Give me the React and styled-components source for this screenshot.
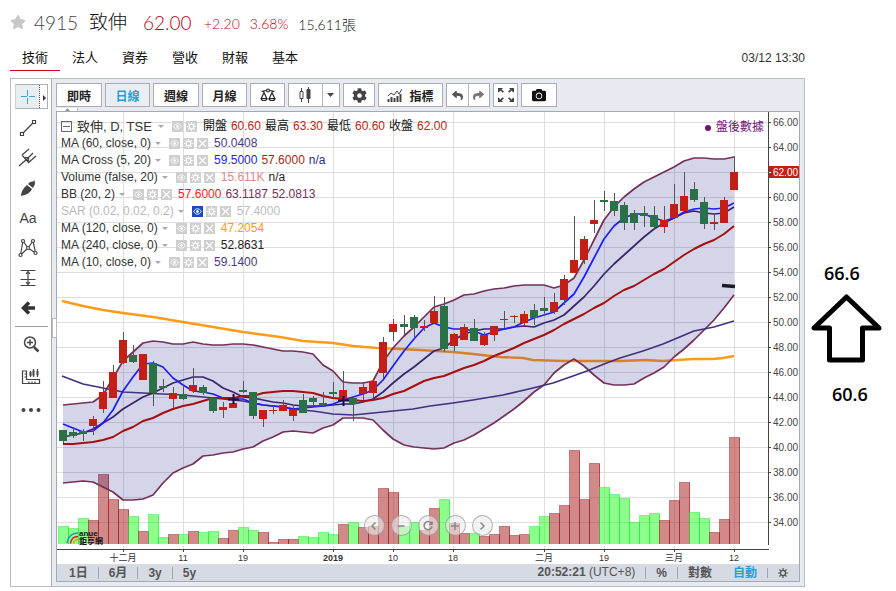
import React from "react";
import styled, { createGlobalStyle } from "styled-components";
import { FaCamera, FaCog, FaReply, FaShare, FaStar } from "react-icons/fa";

const GlobalStyle = createGlobalStyle`
  * {
    box-sizing: border-box;
  }
  body {
    margin: 0;
    background: #ffffff;
    color: #222222;
    font-family: "Liberation Sans", "Noto Sans CJK TC", sans-serif;
    font-size: 12px;
  }
  button {
    font-family: inherit;
    font-size: inherit;
    color: inherit;
    padding: 0;
    margin: 0;
    border: 0;
    background: none;
    cursor: pointer;
  }
`;

const Page = styled.div`
  display: grid;
  grid-template-columns: 1fr 91px;
`;

const StockColumn = styled.main`
  min-width: 0;
  padding: 8px 0 4px 10px;
`;

const Quote = styled.header`
  display: flex;
  align-items: center;
  height: 28px;
  font-family: Lato, "Noto Sans CJK TC", sans-serif;
  font-weight: 300;
  font-size: 14px;
  color: #111111;
`;

const Favorite = styled.button`
  display: flex;
  width: 24px;
  color: #c8c8c8;
  svg {
    width: 16px;
    height: 16px;
  }
`;

const Code = styled.span`
  width: 55px;
  font-size: 19px;
  color: #444444;
`;

const StockName = styled.h1`
  width: 54px;
  margin: 0;
  padding-bottom: 3px;
  font-size: 19px;
  font-weight: 300;
`;

const Price = styled.strong`
  width: 61px;
  font-size: 19px;
  font-weight: 300;
  color: #c00014;
`;

const Change = styled.span`
  margin-right: 10px;
  padding-top: 3px;
  color: #c00014;
`;

const Shares = styled.span`
  padding-top: 3px;
`;

const TabRow = styled.div`
  display: flex;
  align-items: center;
  justify-content: space-between;
  height: 35px;
  margin-bottom: 7px;
`;

const Tabs = styled.nav`
  display: flex;
  align-self: stretch;
`;

const Tab = styled.a`
  width: 50px;
  border-bottom: 1px solid ${(p) => (p.$active ? "#d6001c" : "transparent")};
  padding-top: 10px;
  font-size: 13px;
  line-height: 24px;
  text-align: center;
  text-decoration: none;
  color: #111111;
`;

const UpdatedAt = styled.time`
  padding-top: 8px;
  color: #333333;
`;

const Widget = styled.section`
  display: flex;
  border: 1px solid #b9bcc0;
  background: #e7eaf0;
`;

const Sidebar = styled.aside`
  display: flex;
  flex-direction: column;
  align-items: flex-start;
  flex: 0 0 41px;
  padding: 3px 0 0 4px;
  background: #ffffff;
  border-right: 1px solid #a9adb2;
`;

const Tool = styled.button`
  display: flex;
  align-items: center;
  justify-content: center;
  width: ${(p) => (p.$low ? 32 : 26)}px;
  height: ${(p) => (p.$low ? 33 : 30)}px;
  font-size: 14px;
  color: #444444;
`;

const CursorTool = styled.div`
  display: flex;
  width: 33px;
  height: 25px;
  margin: 2px 0 4px;
  border: 1px solid #aaafb5;
  border-left-color: #cdd2d8;
  background: #e9eef3;
`;

const CursorButton = styled.button`
  display: flex;
  flex: 1;
  align-items: center;
  justify-content: center;
  color: #37a6d2;
`;

const CursorMore = styled.button`
  width: 8px;
  border-left: 1px dotted #555555;
  background: #ffffff;
  line-height: 1;
`;

const Rule = styled.hr`
  width: 33px;
  margin: 3px 0 0;
  border: 0;
  border-top: 1px solid #9a9ea3;
`;

const Main = styled.div`
  flex: 1;
  min-width: 0;
  padding: 4px;
`;

const Toolbar = styled.div`
  display: flex;
  gap: 3px;
  height: 24px;
  margin-bottom: 4px;
`;

const ToolButton = styled.button`
  display: flex;
  align-items: center;
  justify-content: center;
  gap: 6px;
  width: ${(p) => p.$w}px;
  border: 1px solid #a9adb2;
  background: ${(p) => (p.$active ? "#e9eef3" : "#ffffff")};
  color: ${(p) => (p.$active ? "#1ea1d8" : "#222222")};
  font-weight: 700;
  svg {
    flex: none;
  }
`;

const SplitButton = styled.div`
  display: flex;
  width: ${(p) => p.$w}px;
  border: 1px solid #a9adb2;
  background: #ffffff;
  color: #444444;
`;

const Half = styled.button`
  display: flex;
  flex: ${(p) => p.$grow || 1};
  align-items: center;
  justify-content: center;
  & + & {
    border-left: 1px solid #b4b8bd;
  }
`;

const ChartFrame = styled.div`
  position: relative;
  border: 1px solid #a3a9ae;
  background: #ffffff;
`;

const ChartSvg = styled.svg`
  display: block;
  width: 100%;
  height: auto;
  font-family: "Liberation Sans", "Noto Sans CJK TC", sans-serif;
`;

const TopHandle = styled.button`
  position: absolute;
  top: -4px;
  left: 0;
  display: flex;
  justify-content: center;
  width: 21px;
  height: 3px;
  border-right: 1px solid #b9bcc0;
  background: #ffffff;
`;

const SideHandle = styled.button`
  position: absolute;
  top: 206px;
  left: -5px;
  width: 5px;
  height: 20px;
  border: 1px solid #b9bcc0;
  background: #ffffff;
`;

const Legend = styled.div`
  position: absolute;
  top: 6px;
  left: 4px;
`;

const LegendRow = styled.div`
  display: flex;
  align-items: center;
  height: 17px;
  line-height: 17px;
  white-space: nowrap;
  color: ${(p) => (p.$muted ? "#b9b9b9" : "#333333")};
`;

const Fold = styled.button`
  display: flex;
  align-items: center;
  justify-content: center;
  width: 11px;
  height: 11px;
  margin-right: 5px;
  border: 1px solid #666666;
  &::after {
    content: "";
    width: 7px;
    border-top: 1px solid #666666;
  }
`;

const SymbolName = styled.span`
  padding-right: 2px;
  font-size: 13px;
`;

const Caret = styled.span`
  margin: 0 8px 0 4px;
  border: 3px solid transparent;
  border-top-color: #aaaaaa;
  border-bottom: 0;
`;

const Actions = styled.span`
  display: flex;
  gap: 3px;
  margin-right: 6px;
`;

const Action = styled.button`
  display: flex;
  align-items: center;
  justify-content: center;
  width: 11px;
  height: 11px;
  background: ${(p) => (p.$on ? "#1848cc" : "#cfcfcf")};
`;

const Value = styled.span`
  margin-right: 4px;
  color: ${(p) => p.$color};
`;

const AfterHours = styled.div`
  position: absolute;
  top: 7px;
  right: 35px;
  display: flex;
  align-items: center;
  gap: 5px;
  line-height: 17px;
  color: #70147a;
  &::before {
    content: "";
    width: 6px;
    height: 6px;
    border-radius: 50%;
    background: #70147a;
  }
`;

const Navigator = styled.div`
  position: absolute;
  right: 0;
  bottom: 45px;
  left: 0;
  display: flex;
  justify-content: center;
  gap: 6px;
`;

const NavButton = styled.button`
  display: flex;
  align-items: center;
  justify-content: center;
  width: 21px;
  height: 21px;
  border: 1px solid rgba(110, 110, 110, 0.5);
  border-radius: 50%;
  background: rgba(235, 235, 235, 0.6);
`;

const BottomBar = styled.footer`
  display: flex;
  align-items: center;
  justify-content: space-between;
  height: 17px;
  padding: 0 1px;
  background: #d6dae3;
  color: #555555;
  line-height: 17px;
`;

const BarGroup = styled.div`
  display: flex;
  align-items: center;
`;

const BarButton = styled.button`
  display: flex;
  padding: 0 10px;
  border-left: 1px solid ${(p) => (p.$rule ? "#a0a4ab" : "transparent")};
  font-weight: 700;
  line-height: 12px;
  color: ${(p) => (p.$active ? "#1ea1d8" : "#555555")};
`;

const Clock = styled.time`
  margin-right: 10px;
`;

const Notes = styled.aside`
  display: flex;
  flex-direction: column;
  padding: 261px 0 0 5px;
  font-family: "Open Sans", sans-serif;
  font-size: 18px;
  font-weight: 600;
  line-height: 24px;
  color: #000000;
`;

const Note = styled.span`
  padding-left: ${(p) => p.$indent}px;
`;

const BigArrow = styled.svg`
  display: block;
  width: 72px;
  height: 72px;
  margin: 8px 0 17px;
`;

const RED = "#c41f17";
const GREEN = "#2b7148";

// colour, body top, body bottom, high, low, volume top
const candles = [
  ["g", 430, 441, 430, 443, 526],
  ["g", 432, 436, 427, 438, 528],
  ["g", 431, 434, 429, 441, 518],
  ["r", 419, 426, 416, 435, 520],
  ["r", 392, 409, 381, 413, 474],
  ["r", 372, 398, 365, 398, 499],
  ["r", 340, 363, 332, 364, 509],
  ["g", 355, 362, 345, 363, 516],
  ["r", 354, 380, 354, 380, 531],
  ["g", 363, 393, 361, 406, 514],
  ["g", 386, 388, 379, 392, 537],
  ["r", 393, 399, 387, 408, 534],
  ["g", 394, 399, 385, 400, 534],
  ["r", 385, 391, 368, 393, 531],
  ["g", 387, 393, 385, 395, 532],
  ["g", 398, 411, 398, 413, 531],
  ["r", 407, 410, 402, 418, 538],
  ["r", 403, 408, 395, 408, 530],
  ["g", 390, 392, 381, 393, 527],
  ["g", 392, 416, 392, 419, 530],
  ["r", 410, 419, 410, 427, 532],
  ["r", 410, 411, 406, 414, 542],
  ["r", 405, 411, 400, 411, 539],
  ["r", 409, 416, 405, 421, 539],
  ["g", 400, 413, 394, 413, 536],
  ["g", 398, 402, 396, 405, 537],
  ["g", 403, 405, 392, 406, 532],
  ["g", 392, 394, 382, 397, 534],
  ["r", 390, 398, 371, 402, 524],
  ["g", 398, 404, 396, 421, 522],
  ["r", 387, 394, 382, 400, 527],
  ["r", 381, 393, 381, 398, 526],
  ["r", 342, 373, 337, 378, 488],
  ["r", 324, 332, 319, 341, 492],
  ["g", 324, 327, 315, 335, 526],
  ["g", 317, 328, 315, 337, 522],
  ["r", 326, 328, 320, 331, 530],
  ["r", 311, 323, 296, 323, 508],
  ["g", 306, 349, 297, 352, 499],
  ["r", 334, 346, 333, 351, 523],
  ["r", 327, 340, 324, 340, 533],
  ["g", 328, 341, 319, 341, 533],
  ["r", 335, 345, 332, 346, 536],
  ["r", 326, 335, 326, 341, 534],
  ["r", 319, 320, 311, 328, 526],
  ["r", 316, 317, 315, 323, 535],
  ["r", 314, 323, 311, 325, 534],
  ["g", 310, 318, 304, 325, 526],
  ["g", 308, 311, 297, 315, 516],
  ["r", 302, 312, 293, 314, 513],
  ["r", 279, 300, 275, 305, 505],
  ["r", 260, 273, 216, 273, 450],
  ["r", 239, 260, 236, 264, 499],
  ["r", 220, 224, 200, 233, 463],
  ["g", 200, 202, 191, 211, 487],
  ["g", 201, 211, 193, 216, 494],
  ["g", 205, 223, 202, 230, 498],
  ["g", 213, 223, 210, 230, 522],
  ["g", 213, 216, 206, 227, 515],
  ["g", 215, 227, 206, 230, 513],
  ["r", 220, 227, 206, 233, 520],
  ["r", 204, 218, 184, 218, 500],
  ["r", 196, 211, 172, 211, 482],
  ["g", 189, 200, 182, 202, 512],
  ["g", 202, 224, 197, 229, 518],
  ["r", 222, 224, 213, 230, 532],
  ["r", 200, 223, 197, 223, 519],
  ["r", 172, 190, 156, 190, 437],
];

const upperBand = [
  405, 404, 403, 402, 395, 378, 361, 352, 343, 341, 342, 344, 344, 342, 344,
  345, 345, 344, 344, 345, 347, 349, 351, 351, 352, 354, 365, 371, 382, 383,
  383, 381, 362, 348, 336, 327, 317, 307, 304, 300, 295, 294, 291, 289, 288,
  286, 285, 285, 285, 288, 285, 278, 260, 240, 220, 207, 197, 189, 182, 177,
  172, 167, 161, 158, 158, 159, 159, 157,
];
const lowerBand = [
  483, 482, 481, 482, 487, 492, 500, 500, 499, 495, 483, 473, 468, 464, 456,
  455, 453, 452, 449, 447, 441, 437, 432, 431, 432, 433, 428, 425, 418, 418,
  418, 420, 430, 439, 445, 447, 448, 449, 448, 443, 440, 435, 429, 423, 416,
  409, 401, 392, 385, 373, 365, 359, 366, 375, 383, 385, 385, 384, 378, 373,
  367, 357, 349, 340, 330, 320, 308, 295,
];
const ma5 = [
  424, 428, 432, 431, 423, 410, 391, 377, 364, 363, 367, 378, 385, 391, 392,
  394, 398, 399, 399, 403, 405, 406, 407, 409, 408, 407, 406, 404, 400, 397,
  394, 390, 380, 366, 351, 339, 328, 323, 327, 329, 329, 331, 335, 332, 329,
  327, 322, 318, 315, 312, 303, 294, 277, 258, 239, 226, 218, 214, 214, 218,
  221, 218, 212, 209, 208, 209, 208, 203,
];
const ma10 = [
  437, 435, 433, 429, 423, 417, 409, 403, 397, 393, 388, 383, 380, 377, 377,
  381, 388, 392, 397, 398, 400, 402, 403, 405, 406, 406, 406, 405, 404, 404,
  402, 399, 392, 383, 374, 367, 359, 351, 348, 340, 334, 331, 329, 329, 329,
  327, 326, 327, 323, 320, 315, 306, 297, 286, 274, 264, 255, 246, 237, 229,
  223, 218, 213, 211, 213, 214, 213, 207,
];
const ma20 = [
  444, 444, 443, 442, 440, 437, 431, 427, 421, 418, 413, 409, 406, 404, 401,
  398, 398, 398, 396, 396, 393, 392, 391, 391, 392, 393, 396, 398, 399, 400,
  401, 400, 398, 394, 391, 386, 381, 378, 376, 372, 368, 365, 361, 356, 352,
  348, 343, 339, 335, 330, 324, 319, 314, 308, 303, 296, 290, 286, 280, 274,
  269, 262, 255, 249, 244, 240, 234, 226,
];
const ma60 =
  "62,376 83,384 103,388 123,392 143,393 163,394 183,395 203,397 223,399 243,401 263,405 283,407 300,410 313,411 333,414 353,415 373,413 393,411 413,409 430,406 453,403 473,400 503,395 533,388 553,383 573,376 587,371 604,364 620,358 643,351 663,344 694,331 714,327 734,321";
const ma120 =
  "62,301 83,306 103,310 123,313 153,317 183,322 213,327 243,332 280,337 303,341 333,343 353,346 377,348 400,349 420,350 453,352 473,354 500,357 523,358 533,360 563,361 603,361 620,361 646,360 663,361 693,359 713,359 723,358 734,356";

const dates = [
  [123, "十二月"],
  [183, "11"],
  [243, "19"],
  [333, "2019"],
  [393, "10"],
  [453, "18"],
  [544, "二月"],
  [604, "19"],
  [674, "三月"],
  [734, "12"],
];

const prices = Array.from({ length: 17 }, (_, i) => 66 - i * 2);

const xAt = (i) => Math.round(63 + i * 10.015);
const yAt = (price) => Math.round(122 + (66 - price) * 12.5);
const points = (ys) => ys.map((y, i) => `${xAt(i)},${y}`);
const line = (ys) => points(ys).join(" ");
const bandArea = [...points(upperBand), ...points(lowerBand).reverse()].join(
  " "
);

const Chart = () => (
  <ChartSvg viewBox="57 112 742 452" role="img" aria-label="致伸 日線">
    <g stroke="#dedede" shapeRendering="crispEdges">
      {prices.map((p) => (
        <line key={p} x1="57" x2="768" y1={yAt(p) + 0.5} y2={yAt(p) + 0.5} />
      ))}
      {dates.map(([x]) => (
        <line key={x} x1={x + 0.5} x2={x + 0.5} y1="112" y2="549" />
      ))}
    </g>

    <g shapeRendering="crispEdges">
      {candles.map(([c, , , , , top], i) => (
        <rect
          key={i}
          x={xAt(i) - 4.5}
          y={top + 0.5}
          width="10"
          height={544 - top}
          fill={c === "r" ? "rgba(164,20,20,.5)" : "rgba(25,255,25,.5)"}
          stroke={c === "r" ? "rgba(160,30,30,.6)" : "rgba(30,240,50,.6)"}
        />
      ))}
      <rect x="57" y="544" width="711" height="2" fill="#fff" />
    </g>

    <polyline points={ma120} fill="none" stroke="#ff9b19" strokeWidth="2.4" />
    <polygon points={bandArea} fill="rgba(0,0,128,.165)" />
    <g fill="none" strokeWidth="1.7" strokeLinejoin="round">
      <polyline points={line(upperBand)} stroke="#743058" />
      <polyline points={line(lowerBand)} stroke="#743058" />
      <polyline points={ma60} stroke="#43307f" />
      <polyline points={line(ma10)} stroke="#39246e" />
      <polyline points={line(ma5)} stroke="#1d1dff" />
      <polyline points={line(ma20)} stroke="#a60f0f" strokeWidth="2" />
    </g>

    {candles.map(([c, top, bottom, high, low], i) => (
      <g key={i} fill={c === "r" ? RED : GREEN} shapeRendering="crispEdges">
        <rect x={xAt(i)} y={high} width="1" height={low - high} fill="#555" />
        <rect x={xAt(i) - 4} y={top} width="8" height={bottom - top} />
      </g>
    ))}
    <path
      d="M228 399.5h11M233.5 394v10M338 400.5h11M343.5 396v10"
      stroke="#14104a"
      strokeWidth="2"
    />
    <path d="M722 285.5l13 1" stroke="#1c1c24" strokeWidth="3.5" />

    <g shapeRendering="crispEdges" stroke="#444">
      <path d="M768.5 112v433M57 549.5h712" />
      {dates.map(([x]) => (
        <path key={x} d={`M${x + 0.5} 549v3`} />
      ))}
      {prices.map((p) => (
        <path key={p} d={`M769 ${yAt(p) + 0.5}h2`} />
      ))}
    </g>
    <g fontSize="10" fill="#444">
      {prices.map((p) => (
        <text key={p} x="773" y={yAt(p) + 4}>
          {p.toFixed(2)}
        </text>
      ))}
    </g>
    <rect x="769" y="166" width="30" height="12" fill={RED} />
    <path d="M769 172.5h2" stroke="#fff" />
    <text x="773" y="176" fontSize="10" fill="#fff">
      62.00
    </text>
    <g fontSize="9" fill="#333" textAnchor="middle">
      {dates.map(([x, label]) => (
        <text key={x} x={x} y="561" fontWeight={label === "2019" ? 700 : 400}>
          {label}
        </text>
      ))}
    </g>

    <g fill="none" strokeWidth="1.5">
      <path d="M67 543c1-6 5-10 11-10" stroke="#2d8fc0" />
      <path d="M70.5 543.5c.5-4 3-7 7.500-7" stroke="#d42020" />
      <path d="M73.5 543.5c.5-2.5 2-4 5-4" stroke="#f09a1e" />
    </g>
    <g fontWeight="700" fill="#111">
      <text x="79" y="536" fontSize="8">
        anue
      </text>
      <text x="79" y="544" fontSize="8">
        鉅亨網
      </text>
    </g>
  </ChartSvg>
);

const EyeIcon = () => (
  <svg width="9" height="9" viewBox="0 0 9 9" fill="none" stroke="#fff">
    <path d="M.8 4.5C2.5.9 6.5.9 8.2 4.5 6.5 8.1 2.5 8.1.8 4.5z" />
    <circle cx="4.5" cy="4.5" r="1" fill="#fff" />
  </svg>
);

const GearIcon = ({ color = "#fff", size = 9 }) => (
  <svg width={size} height={size} viewBox="0 0 9 9" fill="none" stroke={color}>
    <circle cx="4.5" cy="4.5" r="2.3" strokeWidth="1.2" />
    <path
      d="M4.5 0v1.7M4.5 7.3V9M0 4.5h1.7M7.3 4.5H9M1.3 1.3l1.2 1.2M6.5 6.5l1.2 1.2M1.3 7.7l1.2-1.2M6.5 2.5l1.2-1.2"
      strokeWidth="1.1"
    />
  </svg>
);

const CloseIcon = () => (
  <svg width="9" height="9" viewBox="0 0 9 9" stroke="#fff" strokeWidth="1.2">
    <path d="M1 1l7 7M8 1L1 8" />
  </svg>
);

const indicators = [
  { name: "MA (60, close, 0)", values: [["50.0408", "#4b3a85"]] },
  {
    name: "MA Cross (5, 20)",
    values: [
      ["59.5000", "#1d1dff"],
      ["57.6000", "#a82a1c"],
      ["n/a", "#2b2b85"],
    ],
  },
  {
    name: "Volume (false, 20)",
    values: [
      ["15.611K", "#d98c8c"],
      ["n/a", "#222222"],
    ],
  },
  {
    name: "BB (20, 2)",
    values: [
      ["57.6000", "#ff1a1a"],
      ["63.1187", "#743058"],
      ["52.0813", "#743058"],
    ],
  },
  {
    name: "SAR (0.02, 0.02, 0.2)",
    values: [["57.4000", "#b9bdbd"]],
    hidden: true,
  },
  { name: "MA (120, close, 0)", values: [["47.2054", "#ff9b19"]] },
  { name: "MA (240, close, 0)", values: [["52.8631", "#222222"]] },
  { name: "MA (10, close, 0)", values: [["59.1400", "#4b3a85"]] },
];

const ohlc = [
  ["開盤", "60.60"],
  ["最高", "63.30"],
  ["最低", "60.60"],
  ["收盤", "62.00"],
];

const ChartLegend = () => (
  <Legend>
    <LegendRow>
      <Fold aria-label="收合" />
      <SymbolName>致伸, D, TSE</SymbolName>
      <Caret />
      <Actions>
        <Action aria-label="顯示">
          <EyeIcon />
        </Action>
        <Action aria-label="設定">
          <GearIcon />
        </Action>
      </Actions>
      {ohlc.map(([label, value]) => (
        <React.Fragment key={label}>
          <Value $color="#111111">{label}</Value>
          <Value $color={RED}>{value}</Value>
        </React.Fragment>
      ))}
    </LegendRow>
    {indicators.map(({ name, values, hidden }) => (
      <LegendRow key={name} $muted={hidden}>
        <span>{name}</span>
        <Caret />
        <Actions>
          <Action $on={hidden} aria-label="顯示">
            <EyeIcon />
          </Action>
          <Action aria-label="設定">
            <GearIcon />
          </Action>
          <Action aria-label="移除">
            <CloseIcon />
          </Action>
        </Actions>
        {values.map(([text, color]) => (
          <Value key={text} $color={color}>
            {text}
          </Value>
        ))}
      </LegendRow>
    ))}
  </Legend>
);

const navIcons = [
  ["向左", "M7.5 2.5L4 6l3.500 3.500"],
  ["縮小", "M2.5 6h7"],
  ["重設", "M9.5 3.5A4 4 0 1 0 10 6.5M10 1.5v2.8H7"],
  ["放大", "M2 6h8M6 2v8"],
  ["向右", "M4.5 2.5L8 6l-3.500 3.500"],
];

const ToolIcon = ({ children }) => (
  <svg
    width="20"
    height="20"
    viewBox="0 0 20 20"
    fill="none"
    stroke="#444"
    strokeWidth="1.2"
  >
    {children}
  </svg>
);

const SideTools = () => (
  <Sidebar>
    <CursorTool>
      <CursorButton aria-label="十字游標">
        <svg width="14" height="14" viewBox="0 0 14 14" stroke="currentColor">
          <path d="M0 6.5h6M8 6.5h6M6.5 0v6M6.5 8v6" />
        </svg>
      </CursorButton>
      <CursorMore aria-label="更多游標">
        <svg width="4" height="6" viewBox="0 0 4 6" fill="#333">
          <path d="M1 0l3 3-3 3z" />
        </svg>
      </CursorMore>
    </CursorTool>
    <Tool aria-label="趨勢線">
      <ToolIcon>
        <path d="M4 16L16 4" />
        <path d="M2.5 14.5h3v3h-3zM14.5 2.5h3v3h-3z" fill="#fff" />
      </ToolIcon>
    </Tool>
    <Tool aria-label="分叉線">
      <ToolIcon>
        <path d="M1 18l8-7M4 7l7-6M10 15l8-7M4 7l7 8M9 11l6-6M7.5 9.5h3v3h-3z" />
      </ToolIcon>
    </Tool>
    <Tool aria-label="筆刷">
      <svg width="18" height="18" viewBox="0 0 18 18" fill="#444">
        <path d="M2 17c0-4 2-8 6-11l5 4c-2 4-6 6-11 7zM9 5l2-2 3-.5L15.500 1l.5 4-2 4z" />
      </svg>
    </Tool>
    <Tool>Aa</Tool>
    <Tool aria-label="型態">
      <ToolIcon>
        <path d="M2.5 17L5 3l5 7 5-7 2.500 12M2.5 17l7.500-7 7.500 5" />
        <g fill="#fff">
          <circle cx="2.5" cy="17" r="1.5" />
          <circle cx="5" cy="3" r="1.5" />
          <circle cx="10" cy="10" r="1.5" />
          <circle cx="15" cy="3" r="1.5" />
          <circle cx="17.5" cy="15" r="1.5" />
        </g>
      </ToolIcon>
    </Tool>
    <Tool aria-label="測量">
      <ToolIcon>
        <path d="M2.500 2.500h15M2.500 11.500h15M2.500 17.500h15M10 4v12M8 6l2-2.500L12 6M8 14l2 2.500 2-2.500" />
      </ToolIcon>
    </Tool>
    <Tool aria-label="返回">
      <svg width="14" height="14" viewBox="0 0 14 14" fill="none" stroke="#333">
        <path d="M8 1.500L2.500 7 8 12.500M3 7h11" strokeWidth="3.500" />
      </svg>
    </Tool>
    <Rule />
    <Tool $low aria-label="放大">
      <ToolIcon>
        <circle cx="9" cy="8.5" r="5.5" strokeWidth="1.500" />
        <path d="M13 13l4.500 4.500" strokeWidth="2.500" />
        <path d="M6 8.5h6M9 5.5v6" strokeWidth="1.500" />
      </ToolIcon>
    </Tool>
    <Tool $low aria-label="量尺">
      <ToolIcon>
        <path d="M1.500 4v12.500h17v-4h-13V4z" />
        <path d="M3.500 7h2M3.500 10h2M8 14.500v2M11 14.500v2M14 14.500v2" />
        <path d="M9.500 4v6M12.500 2v8M16.500 2v8" />
        <path d="M9.500 5v4M12.500 3.500v5M16.500 4v4" strokeWidth="2" />
      </ToolIcon>
    </Tool>
    <Tool $low aria-label="更多">
      <svg width="20" height="6" viewBox="0 0 20 6" fill="#444">
        <circle cx="2.5" cy="3" r="2" />
        <circle cx="10" cy="3" r="2" />
        <circle cx="17.5" cy="3" r="2" />
      </svg>
    </Tool>
  </Sidebar>
);

const ChartToolbar = () => (
  <Toolbar>
    <ToolButton $w={46}>即時</ToolButton>
    <ToolButton $w={45} $active>
      日線
    </ToolButton>
    <ToolButton $w={46}>週線</ToolButton>
    <ToolButton $w={45}>月線</ToolButton>
    <ToolButton $w={35} aria-label="比較">
      <svg
        width="16"
        height="14"
        viewBox="0 0 16 14"
        fill="none"
        stroke="#222"
        strokeWidth="1.2"
      >
        <path d="M1.500 3.500L6 2.500M10 2.500l4.500 1M1.500 10L4 4.500 6.500 10M9.500 10L12 4.500l2.500 5.500" />
        <circle cx="8" cy="2.5" r="1.5" />
        <path d="M1 10.500h6a3 2 0 0 1-6 0zM9 10.500h6a3 2 0 0 1-6 0z" />
      </svg>
    </ToolButton>
    <SplitButton $w={52}>
      <Half $grow={2} aria-label="K線">
        <svg width="12" height="16" viewBox="0 0 12 16" stroke="#444">
          <path d="M2.5 1v3M2.5 12v3M9.5 0v16" />
          <path d="M1 4.500h3v7H1z" fill="#fff" />
          <path d="M8 2.500h3v9H8z" fill="#444" />
        </svg>
      </Half>
      <Half aria-label="圖表類型">
        <svg width="7" height="4" viewBox="0 0 7 4" fill="#444">
          <path d="M0 0h7L3.500 4z" />
        </svg>
      </Half>
    </SplitButton>
    <ToolButton $w={32} aria-label="設定">
      <FaCog size={15} color="#444" />
    </ToolButton>
    <ToolButton $w={65}>
      <svg width="16" height="14" viewBox="0 0 16 14" fill="none" stroke="#444">
        <path d="M1 8l3-3 3 2 3-4 2 3 3-5" />
        <path
          d="M1.5 14v-3M4.5 14V9M7.5 14v-4M10.5 14V8M13.5 14V6"
          strokeWidth="2"
        />
      </svg>
      指標
    </ToolButton>
    <SplitButton $w={44}>
      <Half aria-label="復原">
        <FaReply size={11} color="#555" />
      </Half>
      <Half aria-label="重做">
        <FaShare size={11} color="#777" />
      </Half>
    </SplitButton>
    <ToolButton $w={25} aria-label="全螢幕">
      <svg width="16" height="14" viewBox="0 0 16 14" fill="#444">
        <path d="M0 0h5L3.600 1.400 6 3.500 4.800 4.800 2.300 2.500 1 4.200H0zM16 0h-5l1.400 1.400L10 3.500l1.200 1.300 2.500-2.300L15 4.200h1zM0 14h5l-1.400-1.400L6 10.500 4.800 9.200l-2.500 2.300L1 9.800H0zM16 14h-5l1.400-1.400-2.400-2.100 1.200-1.300 2.500 2.300L15 9.800h1z" />
      </svg>
    </ToolButton>
    <ToolButton $w={36} aria-label="截圖">
      <FaCamera size={14} color="#111" />
    </ToolButton>
  </Toolbar>
);

const App = () => {
  return (
    <>
      <GlobalStyle />
      <Page>
        <StockColumn>
          <Quote>
            <Favorite aria-label="加入自選">
              <FaStar />
            </Favorite>
            <Code>4915</Code>
            <StockName>致伸</StockName>
            <Price>62.00</Price>
            <Change>+2.20</Change>
            <Change>3.68%</Change>
            <Shares>15,611張</Shares>
          </Quote>
          <TabRow>
            <Tabs>
              {["技術", "法人", "資券", "營收", "財報", "基本"].map((t, i) => (
                <Tab key={t} href="#" $active={i === 0}>
                  {t}
                </Tab>
              ))}
            </Tabs>
            <UpdatedAt>03/12 13:30</UpdatedAt>
          </TabRow>

          <Widget>
            <SideTools />
            <Main>
              <ChartToolbar />
              <ChartFrame>
                <TopHandle aria-label="收起工具列">
                  <svg width="5" height="3" viewBox="0 0 5 3" fill="#999">
                    <path d="M0 3l2.500-3L5 3z" />
                  </svg>
                </TopHandle>
                <SideHandle aria-label="收起側欄" />
                <Chart />
                <ChartLegend />
                <AfterHours>盤後數據</AfterHours>
                <Navigator>
                  {navIcons.map(([label, d]) => (
                    <NavButton key={label} aria-label={label}>
                      <svg
                        width="12"
                        height="12"
                        viewBox="0 0 12 12"
                        fill="none"
                        stroke="#888"
                        strokeWidth="1.500"
                      >
                        <path d={d} />
                      </svg>
                    </NavButton>
                  ))}
                </Navigator>
                <BottomBar>
                  <BarGroup>
                    <BarButton>1日</BarButton>
                    <BarButton $rule>6月</BarButton>
                    <BarButton $rule>3y</BarButton>
                    <BarButton $rule>5y</BarButton>
                  </BarGroup>
                  <BarGroup>
                    <Clock>
                      <b>20:52:21</b> (UTC+8)
                    </Clock>
                    <BarButton $rule>%</BarButton>
                    <BarButton $rule>對數</BarButton>
                    <BarButton $active>自動</BarButton>
                    <BarButton $rule aria-label="設定">
                      <GearIcon color="#555" size={10} />
                    </BarButton>
                  </BarGroup>
                </BottomBar>
              </ChartFrame>
            </Main>
          </Widget>
        </StockColumn>

        <Notes>
          <Note $indent={14}>66.6</Note>
          <BigArrow viewBox="809 293 72 72" fill="none" stroke="#000">
            <path
              d="M845.5 297L813 328h15.500v32h33v-32H878z"
              strokeWidth="5"
              strokeLinejoin="round"
            />
          </BigArrow>
          <Note $indent={22}>60.6</Note>
        </Notes>
      </Page>
    </>
  );
};

export default App;
